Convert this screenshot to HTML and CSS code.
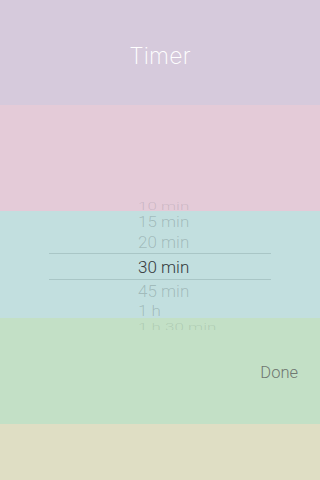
FILE: index.html
```html
<!DOCTYPE html>
<html>
<head>
<meta charset="utf-8">
<link rel="stylesheet" href="styles.css">
</head>
<body>
<div class="screen">
  <header class="band band-purple"><h1 class="title">Timer</h1></header>
  <section class="band band-pink"></section>
  <section class="band band-teal"></section>
  <section class="band band-green"><button class="done">Done</button></section>
  <section class="band band-beige"></section>

  <div class="picker">
    <div class="row r3">10 min</div>
    <div class="row r2">15 min</div>
    <div class="row r1">20 min</div>
    <div class="row sel">30 min</div>
    <div class="row r1b">45 min</div>
    <div class="row r2b">1 h</div>
    <div class="row r3b">1 h 30 min</div>
  </div>
</div>
</body>
</html>
```
FILE: styles.css
```css
html, body { margin: 0; padding: 0; }
body { width: 320px; height: 480px; overflow: hidden; font-family: Roboto, "Liberation Sans", Arial, sans-serif; }
.screen { position: relative; width: 320px; height: 480px; display: flex; flex-direction: column; }
.band { flex: none; display: flex; }
.band-purple { height: 105px; background: #d6cadc; align-items: center; justify-content: center; }
.band-pink { height: 106px; background: #e4cbd8; }
.band-teal { height: 107px; background: #c2dfdf; }
.band-green { height: 106px; background: #c3e0c6; justify-content: flex-end; align-items: flex-start; }
.band-beige { flex: 1; background: #dfdec4; }

.title { margin: 6px 0 0 0; font-family: Inter, "Liberation Sans", sans-serif; font-weight: 200; font-size: 23px; color: #ffffff; letter-spacing: 0.2px; }

.done { margin: 45px 22px 0 0; padding: 0; border: 0; background: none; font-family: Roboto, "Liberation Sans", Arial, sans-serif; font-weight: 300; font-size: 16.5px; color: #6f7771; cursor: pointer; }

.picker { position: absolute; left: 49px; top: 198px; width: 222px; height: 136px; display: flex; flex-direction: column; clip-path: inset(3px 0 4px 0); font-weight: 300; }
.row { flex: none; display: flex; align-items: center; padding-left: 89px; font-size: 17px; color: rgba(90, 110, 110, 0.32); white-space: nowrap; }
.r3 { height: 15px; transform: scaleY(0.65); transform-origin: left 60%; color: rgba(110, 110, 120, 0.22); }
.r2 { height: 18px; transform: scaleY(0.85); }
.r1 { height: 22px; }
.sel { height: 27px; box-sizing: border-box; border-top: 1px solid #a9c6c6; border-bottom: 1px solid #a9c6c6; color: #353b3d; font-weight: 300; }
.r1b { height: 22px; }
.r2b { height: 18px; transform: scaleY(0.88); }
.r3b { height: 15px; transform: scaleY(0.65); transform-origin: left 40%; color: rgba(100, 130, 110, 0.22); }
```
